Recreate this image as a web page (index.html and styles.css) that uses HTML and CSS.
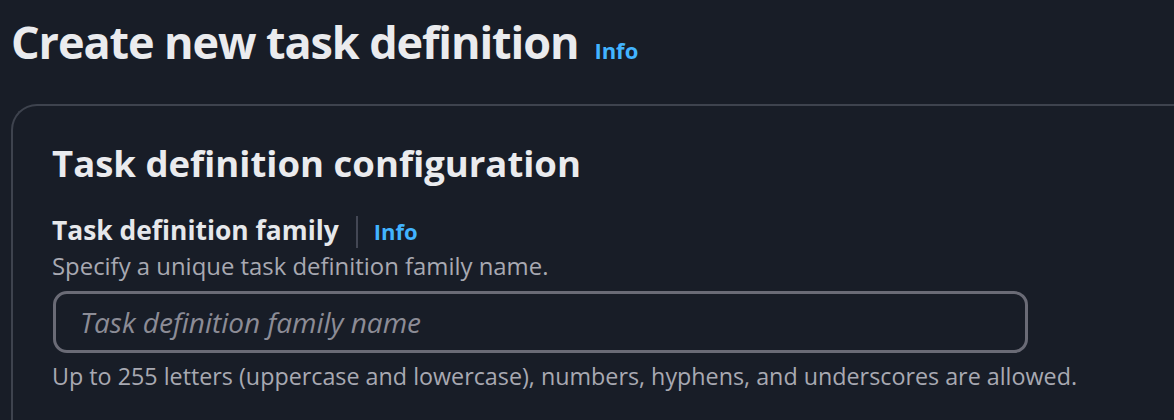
FILE: index.html
```html
<!DOCTYPE html>
<html lang="en">
<head>
<meta charset="utf-8">
<title>Create new task definition</title>
<link rel="stylesheet" href="styles.css">
</head>
<body>
<main class="page">
  <header class="page-header">
    <h1 class="page-title">Create new task definition</h1>
    <a class="info-link info-link--title" href="#">Info</a>
  </header>
  <section class="container">
    <h2 class="container-title">Task definition configuration</h2>
    <div class="form-field">
      <div class="field-label-row">
        <label class="field-label" for="family">Task definition family</label>
        <span class="label-divider"></span>
        <a class="info-link" href="#">Info</a>
      </div>
      <p class="field-description">Specify a unique task definition family name.</p>
      <input class="text-input" id="family" type="text" placeholder="Task definition family name">
      <p class="field-constraint">Up to 255 letters (uppercase and lowercase), numbers, hyphens, and underscores are allowed.</p>
    </div>
  </section>
</main>
</body>
</html>
```
FILE: styles.css
```css
html, body {
  margin: 0;
  padding: 0;
  background: #181d27;
  overflow: hidden;
}
body {
  font-family: "Open Sans", "Noto Sans", sans-serif;
  color: #e9ebed;
  width: 1174px;
  height: 420px;
}
.page {
  display: flex;
  flex-direction: column;
  padding: 12px 0 0 11px;
  box-sizing: border-box;
  width: 1174px;
  height: 420px;
}
.page-header {
  display: flex;
  align-items: baseline;
  gap: 16px;
  height: 92px;
  flex: none;
}
.page-title {
  margin: 0;
  font-size: 45px;
  font-weight: 700;
  line-height: 60px;
  letter-spacing: -1.1px;
  color: #eaebee;
}
.info-link {
  color: #42b4ff;
  font-weight: 700;
  font-size: 22px;
  text-decoration: none;
}
.container {
  flex: 1;
  min-height: 0;
  border: 2px solid #3e434e;
  border-right: 0;
  border-bottom: 0;
  border-radius: 26px 0 0 0;
  padding: 34px 0 0 39px;
  box-sizing: border-box;
}
.container-title {
  margin: 0;
  font-size: 36.5px;
  line-height: 46px;
  font-weight: 700;
  color: #eaebee;
}
.form-field {
  display: flex;
  flex-direction: column;
  align-items: flex-start;
  margin-top: 27px;
}
.field-label-row {
  display: flex;
  align-items: center;
  height: 34px;
}
.field-label {
  font-size: 26.4px;
  line-height: 34px;
  font-weight: 700;
  color: #e6e8eb;
}
.label-divider {
  width: 2px;
  height: 32px;
  background: #434754;
  margin: 4px 16px 0 17px;
}
.field-label-row .info-link {
  line-height: 34px;
  padding-top: 2px;
}
.field-description,
.field-constraint {
  margin: 0;
  line-height: 30px;
  color: #a8a9b2;
}
.field-description {
  margin-top: 4px;
  font-size: 23.9px;
}
.text-input {
  box-sizing: border-box;
  width: 975px;
  height: 62px;
  margin: 10px 0 0 1px;
  padding: 0 0 0 24px;
  border: 3px solid #6a6b76;
  border-radius: 14px;
  background: #181d27;
  font-family: inherit;
  font-size: 28px;
  color: #e9ebed;
  outline: none;
}
.text-input::placeholder {
  font-style: italic;
  color: #8c8c96;
}
.field-constraint {
  margin-top: 8px;
  font-size: 23.3px;
}
```
